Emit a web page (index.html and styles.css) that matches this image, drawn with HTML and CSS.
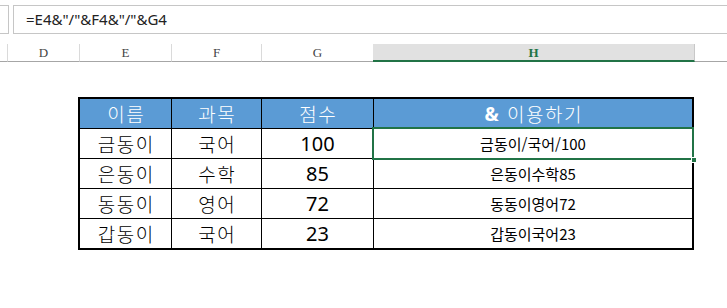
FILE: index.html
```html
<!DOCTYPE html>
<html lang="ko">
<head>
<meta charset="utf-8">
<link rel="stylesheet" href="styles.css">
</head>
<body>
<div class="formula-row">
  <div class="namebox"></div>
  <div class="fx">=E4&amp;"/"&amp;F4&amp;"/"&amp;G4</div>
</div>
<div class="col-headers">
  <div class="ch c0"></div>
  <div class="ch cD">D</div>
  <div class="ch cE">E</div>
  <div class="ch cF">F</div>
  <div class="ch cG">G</div>
  <div class="ch cH">H</div>
  <div class="ch crest"></div>
</div>
<div class="sheet">
  <div class="grid">
    <div class="cell head">이름</div>
    <div class="cell head">과목</div>
    <div class="cell head">점수</div>
    <div class="cell head"><b class="amp">&amp;</b>&nbsp;이용하기</div>

    <div class="cell">금동이</div>
    <div class="cell">국어</div>
    <div class="cell num">100</div>
    <div class="cell res selected">금동이/국어/100<span class="handle"></span></div>

    <div class="cell">은동이</div>
    <div class="cell">수학</div>
    <div class="cell num">85</div>
    <div class="cell res">은동이수학85</div>

    <div class="cell">동동이</div>
    <div class="cell">영어</div>
    <div class="cell num">72</div>
    <div class="cell res">동동이영어72</div>

    <div class="cell">갑동이</div>
    <div class="cell">국어</div>
    <div class="cell num">23</div>
    <div class="cell res">갑동이국어23</div>
  </div>
</div>
</body>
</html>
```

FILE: styles.css
```css
* { box-sizing: border-box; }
html, body {
  margin: 0;
  padding: 0;
  background: #ffffff;
  width: 727px;
  height: 308px;
  overflow: hidden;
}
body {
  font-family: "Noto Sans CJK KR", "Noto Sans", sans-serif;
  color: #000;
}
.formula-row {
  display: flex;
  margin-top: 5px;
  height: 29px;
}
.namebox {
  width: 9px;
  border: 1px solid #c6c6c6;
  border-left: none;
}
.fx {
  margin-left: 4px;
  flex: 1;
  border: 1px solid #c6c6c6;
  border-right: none;
  padding-left: 12px;
  font-family: "Noto Sans", "Open Sans", sans-serif;
  font-size: 15px;
  line-height: 26px;
  color: #222;
}
.col-headers {
  display: flex;
  margin-top: 10px;
  height: 18px;
}
.ch {
  height: 18px;
  border-bottom: 1px solid #a6a6a6;
  border-right: 1px solid #dadada;
  font-family: "Liberation Serif", "DejaVu Serif", serif;
  font-size: 13px;
  line-height: 17px;
  text-align: center;
  color: #444;
}
.c0 { width: 8px; }
.cD { width: 72px; }
.cE { width: 92px; }
.cF { width: 90px; }
.cG { width: 111px; border-right: none; }
.cH {
  width: 322px;
  background: #e1e1e1;
  border-bottom: 2px solid #217346;
  border-right: 1px solid #c8c8c8;
  color: #217346;
  font-weight: bold;
}
.crest { flex: 1; border-right: none; }
.sheet {
  margin-top: 35px;
  padding-left: 78px;
}
.grid {
  display: grid;
  width: 616px;
  grid-template-columns: 91px 89px 111px 318px;
  grid-auto-rows: 29px;
  gap: 1px;
  background: #000;
  border: 2px solid #000;
}
.cell {
  background: #fff;
  display: flex;
  align-items: center;
  justify-content: center;
  font-size: 19px;
  font-weight: 300;
  letter-spacing: 1.5px;
  padding-left: 1.5px;
}
.head {
  background: #5b9bd5;
  color: #fff;
}
.amp {
  font-family: "Noto Sans", sans-serif;
  font-weight: bold;
}
.num {
  font-family: "Noto Sans", sans-serif;
  font-weight: 400;
  font-size: 20px;
  letter-spacing: 0;
  padding-left: 0;
}
.res {
  font-size: 15px;
  font-weight: 400;
  letter-spacing: 0;
  padding-left: 0;
}
.selected {
  position: relative;
  outline: 2px solid #217346;
}
.handle {
  position: absolute;
  right: -5px;
  bottom: -5px;
  width: 6px;
  height: 6px;
  background: #217346;
  border: 1px solid #fff;
}
```
